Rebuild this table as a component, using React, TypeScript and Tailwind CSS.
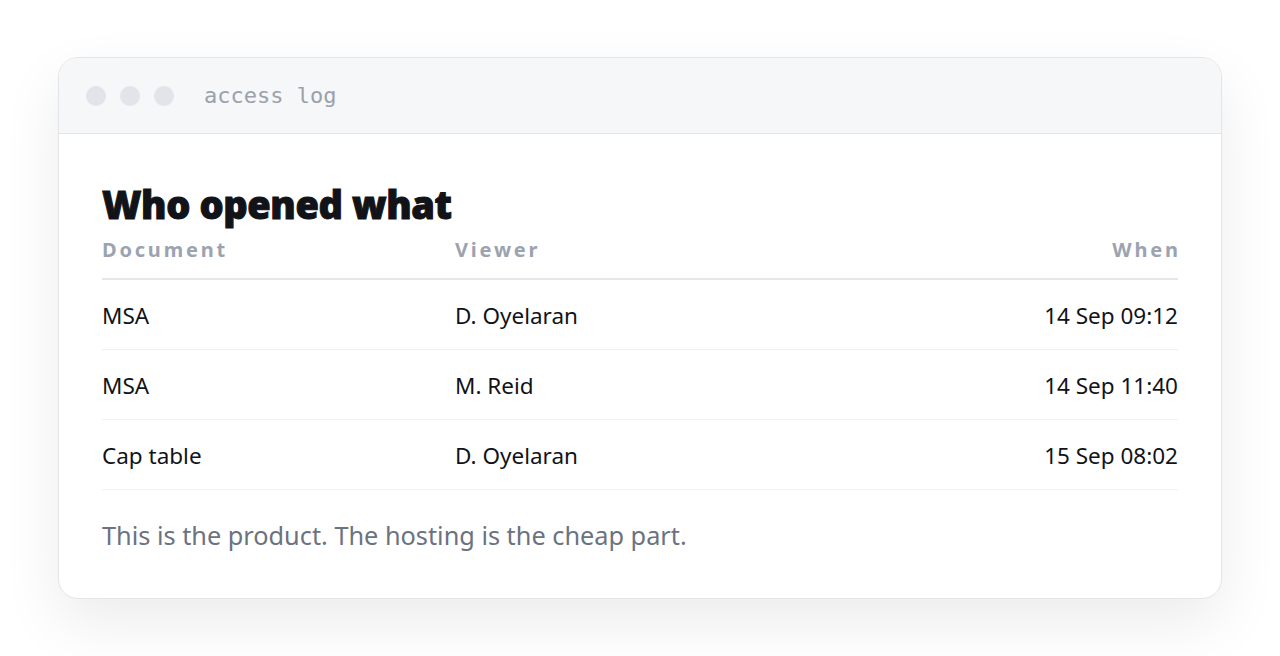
import React from "react";

const rows = [
  { doc: "MSA", viewer: "D. Oyelaran", when: "14 Sep 09:12" },
  { doc: "MSA", viewer: "M. Reid", when: "14 Sep 11:40" },
  { doc: "Cap table", viewer: "D. Oyelaran", when: "15 Sep 08:02" },
];

export default function App() {
  return (
    <div
      className="w-[1280px] h-[656px] bg-white overflow-hidden pt-[57px] px-[58px]"
      style={{ fontFamily: '"Noto Sans", "Open Sans", sans-serif' }}
    >
      <div className="rounded-[20px] border border-[#e3e5e8] bg-white overflow-hidden shadow-[0_24px_60px_rgba(0,0,0,0.08)]">
        <div className="h-[76px] bg-[#f6f7f9] border-b border-[#e3e5e8] flex items-center pl-[27px] gap-[14px]">
          <span className="w-[20px] h-[20px] rounded-full bg-[#e1e4e8]" />
          <span className="w-[20px] h-[20px] rounded-full bg-[#e1e4e8]" />
          <span className="w-[20px] h-[20px] rounded-full bg-[#e1e4e8]" />
          <span
            className="ml-[16px] text-[22px] text-[#9aa1ab]"
            style={{ fontFamily: '"DejaVu Sans Mono", "Liberation Mono", monospace' }}
          >
            access log
          </span>
        </div>
        <div className="px-[43px] pt-[46px] pb-[46px]">
          <h1 className="text-[38px] leading-[48px] font-black text-[#111318] tracking-[-0.4px] [-webkit-text-stroke:1px_#111318]">
            Who opened what
          </h1>
          <div className="grid grid-cols-[353px_1fr_auto] border-b-2 border-[#e5e7eb] pb-[15px] pt-[9px] text-[20px] font-bold tracking-[2.8px] text-[#9ca3af] leading-[26px]">
            <span>Document</span>
            <span>Viewer</span>
            <span className="text-right -mr-[2.8px]">When</span>
          </div>
          {rows.map((r, i) => (
            <div
              key={i}
              className="grid grid-cols-[353px_1fr_auto] items-center h-[70px] pt-[2px] border-b border-[#f0f1f3] text-[22.5px] text-[#111318]"
            >
              <span>{r.doc}</span>
              <span>{r.viewer}</span>
              <span className="text-right">{r.when}</span>
            </div>
          ))}
          <p className="mt-[28px] text-[25.3px] text-[#6b7280] leading-[34px]">
            This is the product. The hosting is the cheap part.
          </p>
        </div>
      </div>
    </div>
  );
}
